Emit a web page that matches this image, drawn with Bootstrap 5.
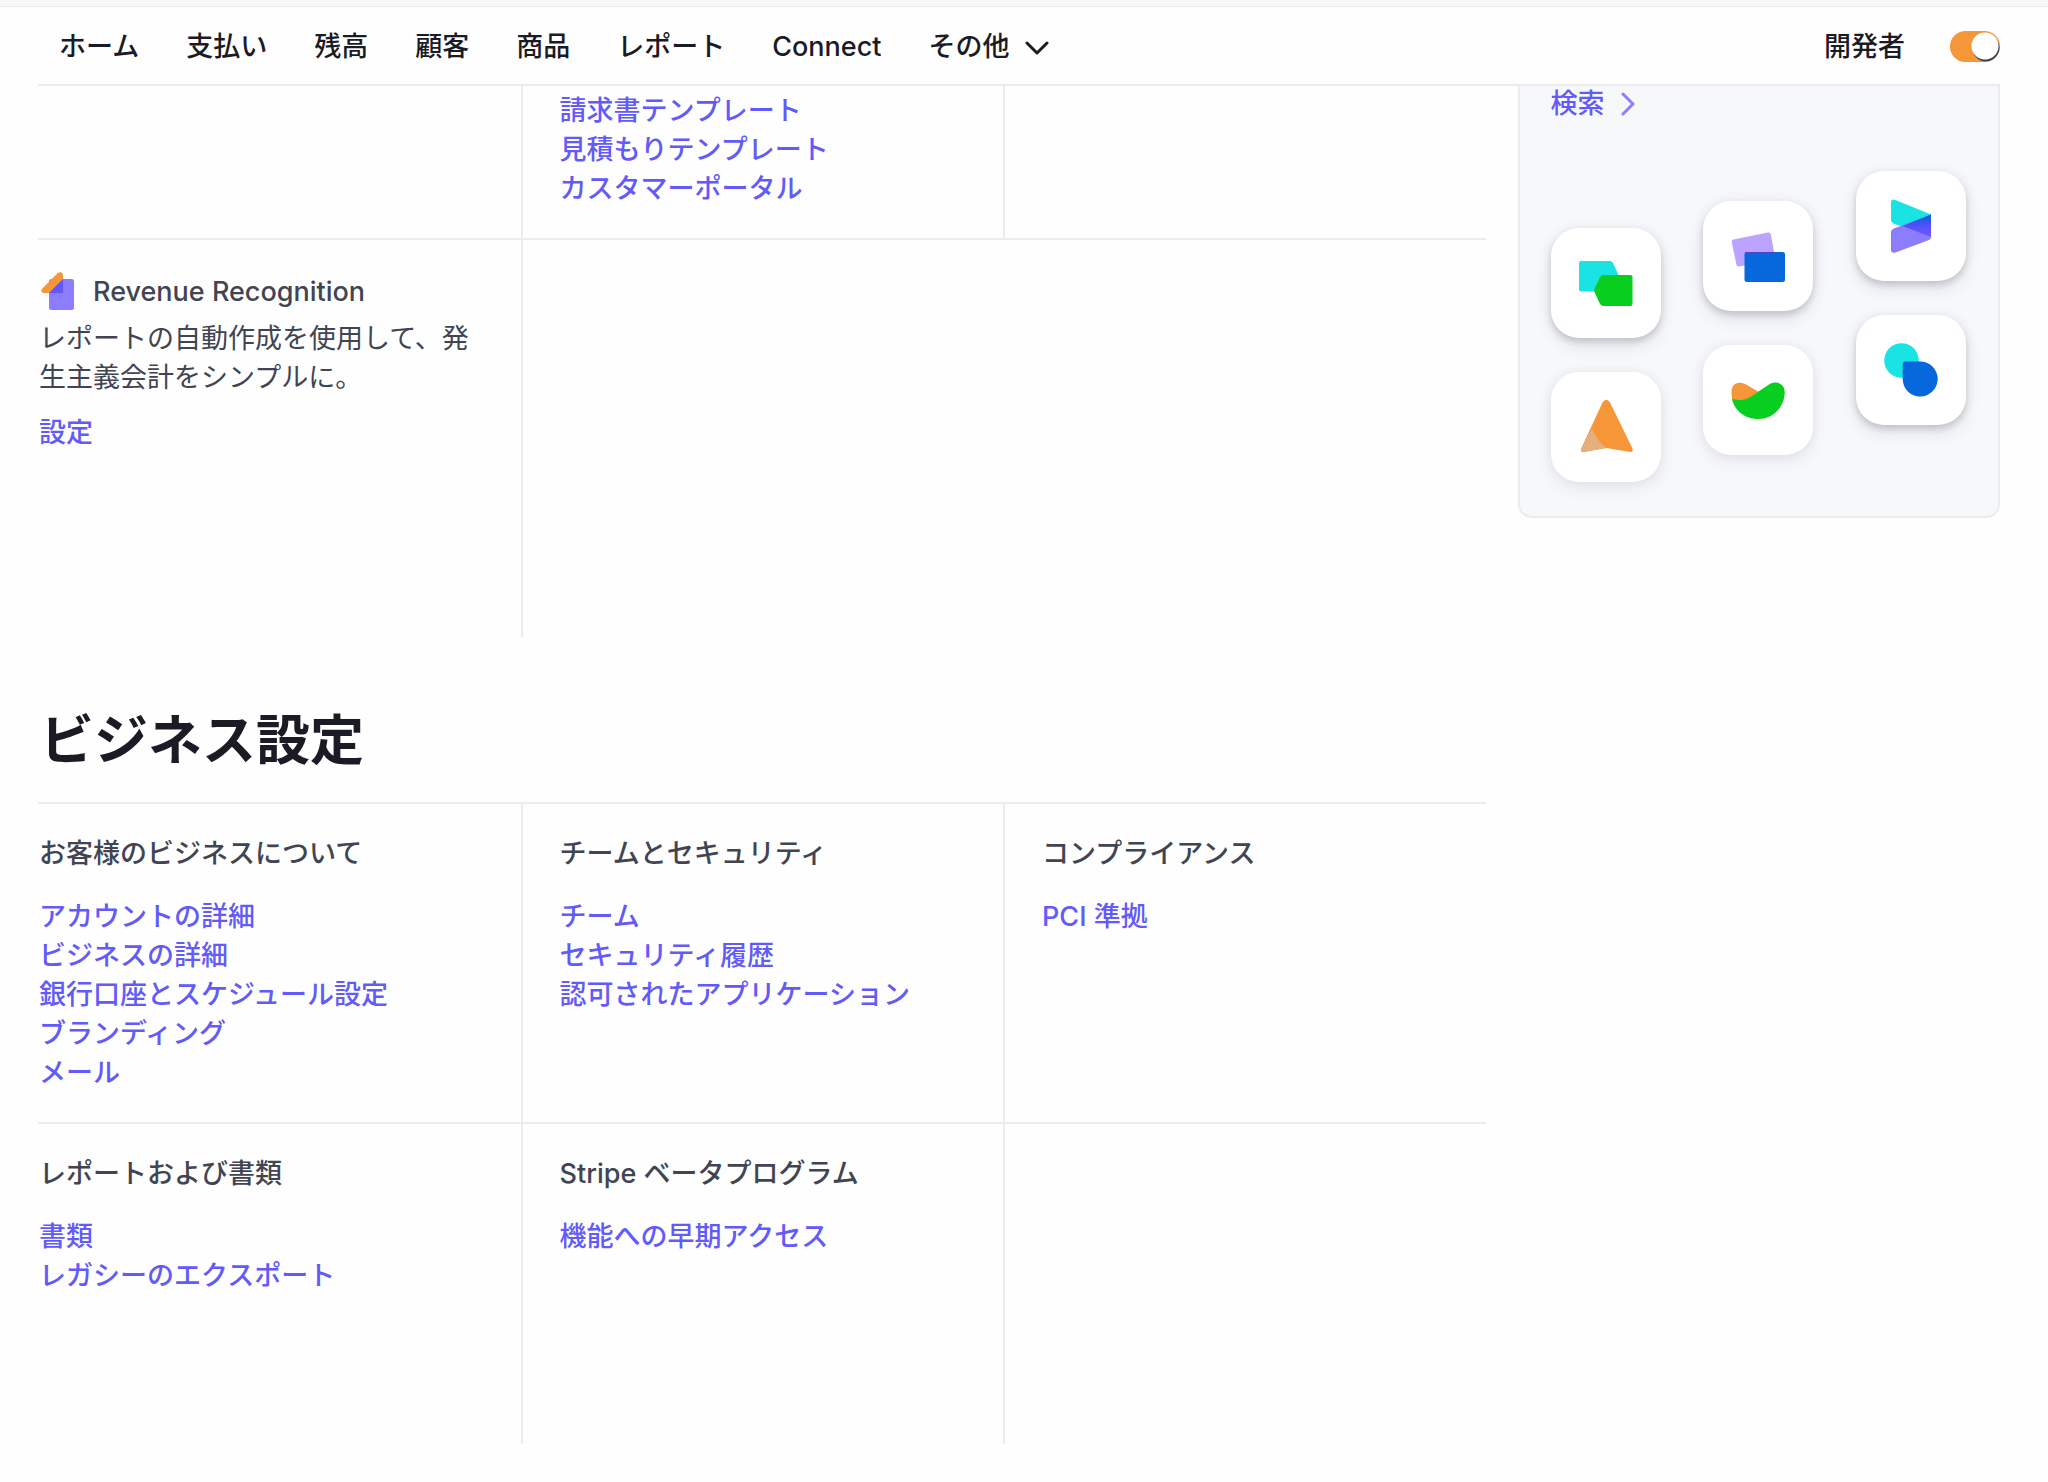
<!DOCTYPE html>
<html lang="ja">
<head>
<meta charset="utf-8">
<meta name="viewport" content="width=device-width, initial-scale=1">
<title>ビジネス設定</title>
<link href="https://cdn.jsdelivr.net/npm/bootstrap@5.3.0/dist/css/bootstrap.min.css" rel="stylesheet">
<style>
:root { --line: #ebebf0; --ink: #1a1b25; --text: #414552; --accent: #625afa; }
body { font-family: Inter, "Noto Sans CJK JP", sans-serif; font-size: 27px; line-height: 39px; color: var(--text); background: #fefefe; }
a { color: var(--accent); text-decoration: none; font-weight: 500; }
.top-strip { height: 7px; background: #f6f8fa; border-bottom: 1px solid var(--line); }
.page-pad { padding-left: 38px; padding-right: 48px; }
.top-bar { height: 77px; padding-left: 21px; padding-top: 2px; }
.main-menu { gap: 47px; }
.main-menu a, .main-menu button, .dev-label { color: var(--ink); font-weight: 500; }
.main-menu button { line-height: 39px; }
.dev-group { gap: 45px; }
.dev-switch.form-check-input {
  width: 50px; height: 31px; border: 0; border-radius: 16px; margin: 0;
  background-color: #f59638;
  background-image: radial-gradient(circle at 35px 15px, #fff 13px, transparent 14px), radial-gradient(circle at 36px 17px, #414552 13px, transparent 14px);
  background-size: 100% 100%; background-position: 0 0;
}
.layout-wrap { grid-template-columns: minmax(0, 3fr) minmax(0, 1fr); border-top: 2px solid var(--line); gap: 32px; }
.side-panel { border: 2px solid var(--line); border-top: 0; border-radius: 0 0 14px 14px; background: #f6f8fa; padding: 0 32px 34px 31px; }
.cell-row { grid-template-columns: repeat(3, minmax(0, 1fr)); border-bottom: 2px solid var(--line); }
.cell-row.last-row { border-bottom: 0; }
.cell-box { padding: 30px 32px 30px 37px; border-left: 2px solid var(--line); }
.cell-box:first-child { padding-left: 1px; border-left: 0; }
.cell-box.open { border-left-color: transparent; }
.cut-row .cell-box { padding-top: 5px; }
.tall-row { min-height: 397px; }
.base-row { min-height: 320px; }
.cell-title { font-size: 27px; line-height: 39px; font-weight: 500; color: var(--text); margin: 0 0 24px; }
.product-title { gap: 18px; margin: 2px 0 8px; }
.section-title { font-size: 54px; line-height: 66px; font-weight: 700; color: var(--ink); margin: 0; padding: 71px 0 28px 2px; border-bottom: 2px solid var(--line); }
.search-link { line-height: 36px; gap: 15px; }
.tile-field { margin-top: 49px; }
.tile-col { gap: 34px; }
.drop-1 { padding-top: 57px; }
.drop-2 { padding-top: 30px; }
.app-tile { width: 110px; height: 110px; border-radius: 28px; background: #fff; box-shadow: 0 8px 16px rgba(65,69,100,.12), 0 4px 6px rgba(0,0,0,.12), 0 0 12px rgba(65,69,130,.07); }
.app-tile.soft { box-shadow: 0 6px 16px rgba(65,69,100,.09), 0 0 10px rgba(65,69,130,.07); }
.app-tile svg { display: block; }
</style>
<script src="https://cdn.jsdelivr.net/npm/bootstrap@5.3.0/dist/js/bootstrap.bundle.min.js"></script>
</head>
<body>
<div class="top-strip"></div>
<header class="page-pad">
  <div class="top-bar d-flex align-items-center justify-content-between">
    <nav class="main-menu d-flex align-items-center text-nowrap">
      <a href="#">ホーム</a>
      <a href="#">支払い</a>
      <a href="#">残高</a>
      <a href="#">顧客</a>
      <a href="#">商品</a>
      <a href="#">レポート</a>
      <a href="#">Connect</a>
      <button type="button" class="border-0 bg-transparent p-0 d-flex align-items-center gap-3">その他
        <svg width="24" height="16" viewBox="0 0 24 16" fill="none" stroke="#1a1b25" stroke-width="3" stroke-linecap="round" stroke-linejoin="round" aria-hidden="true"><path d="M2 4l10 10L22 4"/></svg>
      </button>
    </nav>
    <div class="dev-group d-flex align-items-center">
      <label class="dev-label" for="devMode">開発者</label>
      <div class="form-switch p-0 d-flex"><input class="form-check-input dev-switch" type="checkbox" role="switch" id="devMode" checked></div>
    </div>
  </div>
</header>

<div class="page-pad">
<div class="layout-wrap d-grid align-items-start">
  <main>
    <section>
      <div class="cell-row cut-row d-grid">
        <div class="cell-box"></div>
        <div class="cell-box">
          <ul class="list-unstyled m-0">
            <li><a href="#">請求書テンプレート</a></li>
            <li><a href="#">見積もりテンプレート</a></li>
            <li><a href="#">カスタマーポータル</a></li>
          </ul>
        </div>
        <div class="cell-box"></div>
      </div>
      <div class="cell-row last-row tall-row d-grid">
        <div class="cell-box">
          <h3 class="cell-title product-title d-flex align-items-center">
            <svg width="36" height="39" viewBox="0 0 36 39" aria-hidden="true">
              <rect x="10" y="7" width="25" height="31" rx="2.5" fill="#8c7dff"/>
              <path d="M18.500 1.200C20.500-.8 24 .2 24 3v4L10 21H5C2.200 21 1.400 18.500 3.200 16.700z" fill="#f59638"/>
              <path d="M24 7v14H10z" fill="#6257ff"/>
            </svg>
            <span>Revenue Recognition</span>
          </h3>
          <p class="mb-3">レポートの自動作成を使用して、発生主義会計をシンプルに。</p>
          <a href="#">設定</a>
        </div>
        <div class="cell-box"></div>
        <div class="cell-box open"></div>
      </div>
    </section>

    <section>
      <h2 class="section-title">ビジネス設定</h2>
      <div class="cell-row d-grid">
        <div class="cell-box">
          <h3 class="cell-title">お客様のビジネスについて</h3>
          <ul class="list-unstyled m-0">
            <li><a href="#">アカウントの詳細</a></li>
            <li><a href="#">ビジネスの詳細</a></li>
            <li><a href="#">銀行口座とスケジュール設定</a></li>
            <li><a href="#">ブランディング</a></li>
            <li><a href="#">メール</a></li>
          </ul>
        </div>
        <div class="cell-box">
          <h3 class="cell-title">チームとセキュリティ</h3>
          <ul class="list-unstyled m-0">
            <li><a href="#">チーム</a></li>
            <li><a href="#">セキュリティ履歴</a></li>
            <li><a href="#">認可されたアプリケーション</a></li>
          </ul>
        </div>
        <div class="cell-box">
          <h3 class="cell-title">コンプライアンス</h3>
          <ul class="list-unstyled m-0">
            <li><a href="#">PCI 準拠</a></li>
          </ul>
        </div>
      </div>
      <div class="cell-row last-row base-row d-grid">
        <div class="cell-box">
          <h3 class="cell-title">レポートおよび書類</h3>
          <ul class="list-unstyled m-0">
            <li><a href="#">書類</a></li>
            <li><a href="#">レガシーのエクスポート</a></li>
          </ul>
        </div>
        <div class="cell-box">
          <h3 class="cell-title">Stripe ベータプログラム</h3>
          <ul class="list-unstyled m-0">
            <li><a href="#">機能への早期アクセス</a></li>
          </ul>
        </div>
        <div class="cell-box"></div>
      </div>
    </section>
  </main>

  <aside class="side-panel">
    <a href="#" class="search-link d-flex align-items-center">検索
      <svg width="16" height="24" viewBox="0 0 16 24" fill="none" stroke="#8d7ffa" stroke-width="3" stroke-linecap="round" stroke-linejoin="round" aria-hidden="true"><path d="M3 2l10 10L3 22"/></svg>
    </a>
    <div class="tile-field d-flex justify-content-between align-items-start">
      <div class="tile-col drop-1 d-flex flex-column">
        <div class="app-tile">
          <svg width="110" height="110" viewBox="0 0 110 110" aria-hidden="true">
            <path d="M30 33h29q2 0 3 2l5.500 12L44 63.500H30q-2 0-2-2V35q0-2 2-2z" fill="#1ae3e3"/>
            <path d="M52 47h27.500q2 0 2 2v27q0 2-2 2H53q-3 0-4.500-3L43.500 64q-.7-1.500 0-3L48.500 50q1.300-3 3.500-3z" fill="#08cf1f"/>
          </svg>
        </div>
        <div class="app-tile soft">
          <svg width="110" height="110" viewBox="0 0 110 110" aria-hidden="true">
            <path d="M51.500 30.500Q55.300 25 59 30.500L81.500 76.500Q82.500 80 79 80L55.300 76 32.500 80Q29 80 30.200 76.500z" fill="#f59638"/>
            <path d="M41 56.500L30.200 76.500Q29 80 32.500 80L55.300 76Q46 69 41 56.500z" fill="#e5b07c"/>
          </svg>
        </div>
      </div>
      <div class="tile-col drop-2 d-flex flex-column">
        <div class="app-tile">
          <svg width="110" height="110" viewBox="0 0 110 110" aria-hidden="true">
            <path d="M30.500 38.500L65 31.500q2.300-.4 2.800 1.800L72.500 59 36 65.500q-2 .3-2.500-1.700L28.700 41q-.4-2 1.800-2.500z" fill="#bba3ff"/>
            <rect x="41.500" y="51" width="40.500" height="30" rx="2.500" fill="#0768dd"/>
            <path d="M44 51h27l.3 1.200H41.500Q42 51 44 51z" fill="#5047c9"/>
          </svg>
        </div>
        <div class="app-tile soft">
          <svg width="110" height="110" viewBox="0 0 110 110" aria-hidden="true">
            <path d="M28.500 47C28.500 38 36 35.500 43 39.500L56 47 46 57H30Q28.500 52 28.500 47z" fill="#f59638"/>
            <path d="M29 53.500C38 57 45 54.500 54 47.500L66 39.500C74 35 81.700 39 81.700 47 81.700 62 70 74 55.300 74 42 74 31 65.500 29 53.500z" fill="#08cf1f"/>
          </svg>
        </div>
      </div>
      <div class="tile-col d-flex flex-column">
        <div class="app-tile">
          <svg width="110" height="110" viewBox="0 0 110 110" aria-hidden="true">
            <defs><linearGradient id="fold" x1="0" y1="0" x2="0" y2="1"><stop offset="0" stop-color="#075fda"/><stop offset=".6" stop-color="#5c50ff"/><stop offset="1" stop-color="#6b5eff"/></linearGradient></defs>
            <path d="M39.500 29L75 43.500V66L37.500 52.500Q35 51.500 35 49V31.500Q35 27.500 39.500 29z" fill="#1ae3e3"/>
            <path d="M75 43.500L38 57.500Q35 58.700 35 61.500V79q0 3.500 4.500 2.500L73 69q2-.8 2-3z" fill="#8c7dff"/>
            <path d="M75 43.500V66L46.500 55z" fill="url(#fold)"/>
          </svg>
        </div>
        <div class="app-tile">
          <svg width="110" height="110" viewBox="0 0 110 110" aria-hidden="true">
            <circle cx="45.500" cy="45.500" r="17.300" fill="#1ae3e3"/>
            <path d="M49 46.500H64A17.500 17.500 0 1 1 46.700 64V49Q46.700 46.500 49 46.500z" fill="#0768dd"/>
          </svg>
        </div>
      </div>
    </div>
  </aside>
</div>
</div>
</body>
</html>
